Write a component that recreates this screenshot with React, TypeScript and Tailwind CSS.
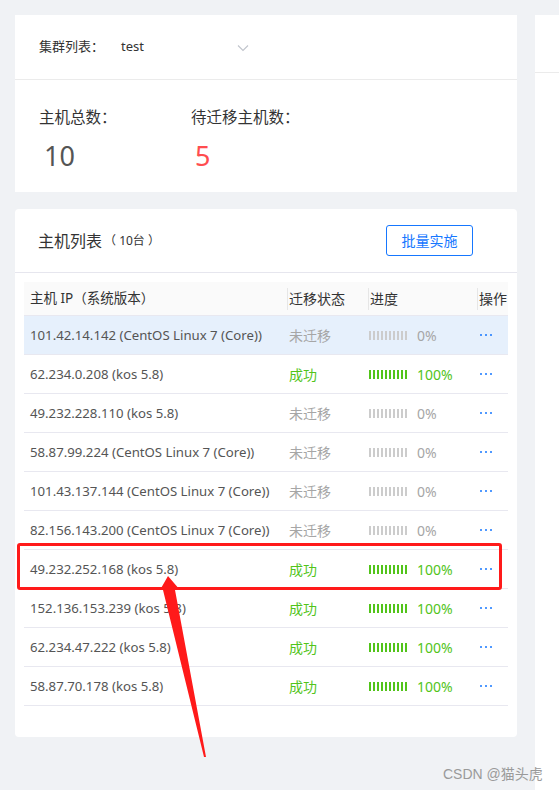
import React from "react";

const rows = [
  { ip: "101.42.14.142 (CentOS Linux 7 (Core))", ok: false, sel: true },
  { ip: "62.234.0.208 (kos 5.8)", ok: true },
  { ip: "49.232.228.110 (kos 5.8)", ok: false },
  { ip: "58.87.99.224 (CentOS Linux 7 (Core))", ok: false },
  { ip: "101.43.137.144 (CentOS Linux 7 (Core))", ok: false },
  { ip: "82.156.143.200 (CentOS Linux 7 (Core))", ok: false },
  { ip: "49.232.252.168 (kos 5.8)", ok: true },
  { ip: "152.136.153.239 (kos 5.8)", ok: true },
  { ip: "62.234.47.222 (kos 5.8)", ok: true },
  { ip: "58.87.70.178 (kos 5.8)", ok: true },
];

const font = { fontFamily: '"Segoe UI", "Noto Sans", "Noto Sans CJK SC", sans-serif' };

function Bar({ ok }: { ok: boolean }) {
  return (
    <div className="flex gap-[2px] items-center">
      {Array.from({ length: 10 }).map((_, i) => (
        <div key={i} className={ok ? "w-[2px] h-[9px] bg-[#52c41a]" : "w-[2px] h-[9px] bg-[#cccccc]"} />
      ))}
    </div>
  );
}

export default function App() {
  return (
    <div
      className="relative w-[559px] h-[790px] bg-[#f0f2f5] flex overflow-hidden"
      style={font}
    >
      <div className="w-[517px] pl-[15px] pt-[15px] flex flex-col">
        {/* top card */}
        <div className="bg-white h-[177px] flex flex-col">
          <div className="h-[65px] border-b border-[#ebebeb] flex items-center pl-[24px] text-[13px] text-[#333]">
            <span className="w-[82px]">集群列表：</span>
            <span className="text-[13px] text-[#333]">test</span>
            <svg className="ml-[93px] mt-[1px]" width="12" height="8" viewBox="0 0 12 8">
              <path d="M1 1.5 L6 6.5 L11 1.5" fill="none" stroke="#c0c4cc" strokeWidth="1.1" />
            </svg>
          </div>
          <div className="flex pl-[24px] pt-[26px]">
            <div className="w-[152px] flex flex-col">
              <span className="text-[15.5px] text-[#333] leading-[22px]">主机总数：</span>
              <span className="text-[27px] text-[#555] leading-[32px] mt-[12px] pl-[5px]">10</span>
            </div>
            <div className="flex flex-col">
              <span className="text-[15.5px] text-[#333] leading-[22px]">待迁移主机数：</span>
              <span className="text-[27px] text-[#ff4d4f] leading-[32px] mt-[12px] pl-[4px]">5</span>
            </div>
          </div>
        </div>

        {/* table card */}
        <div className="mt-[17px] bg-white h-[528px] rounded-[4px] flex flex-col">
          <div className="h-[64px] border-b border-[#e6e6ee] flex items-center pl-[23px] pr-[44px]">
            <span className="text-[16px] text-[#333]">主机列表</span>
            <span className="text-[12px] text-[#333] ml-[2px]">（ 10台 ）</span>
            <div className="flex-1" />
            <button className="w-[87px] h-[31px] border border-[#1677ff] rounded-[3px] text-[14px] text-[#1677ff] bg-white">
              批量实施
            </button>
          </div>
          <div className="mx-[9px] mt-[9px] overflow-hidden">
            <div className="w-[540px]">
              <div className="h-[34px] bg-[#fafafa] flex items-center text-[14px] text-[#333] border-b border-[#e8e8f0]">
                <div className="w-[263px] pl-[6px] text-[13.5px]">主机 IP（系统版本）</div>
                <div className="w-[81px] border-l border-[#e6e6e6] pl-[1px] h-[22px] flex items-center">迁移状态</div>
                <div className="w-[109px] border-l border-[#e6e6e6] pl-[1px] h-[22px] flex items-center">进度</div>
                <div className="flex-1 border-l border-[#e6e6e6] pl-[1px] h-[22px] flex items-center">操作</div>
              </div>
              {rows.map((r, i) => (
                <div
                  key={i}
                  className={
                    r.sel
                      ? "h-[39px] bg-[#e6f0fc] flex items-center text-[14px] border-b border-[#e8e8f0]"
                      : "h-[39px] bg-white flex items-center text-[14px] border-b border-[#e8e8f0]"
                  }
                >
                  <div className="w-[263px] pl-[6px] pt-[2px] text-[#555] text-[13.2px]">{r.ip}</div>
                  <div className={r.ok ? "w-[81px] pl-[2px] text-[#52c41a]" : "w-[81px] pl-[2px] text-[#a6a6a6]"}>
                    {r.ok ? "成功" : "未迁移"}
                  </div>
                  <div className="w-[109px] pl-[1px] flex items-center">
                    <Bar ok={r.ok} />
                    <span className={r.ok ? "ml-[10px] text-[#52c41a]" : "ml-[10px] text-[#a6a6a6]"}>
                      {r.ok ? "100%" : "0%"}
                    </span>
                  </div>
                  <div className="flex-1 pl-[3px] flex items-center gap-[3px]">
                    <div className="w-[2px] h-[2px] bg-[#1677ff] rounded-full" />
                    <div className="w-[2px] h-[2px] bg-[#1677ff] rounded-full" />
                    <div className="w-[2px] h-[2px] bg-[#1677ff] rounded-full" />
                  </div>
                </div>
              ))}
            </div>
          </div>
        </div>
      </div>

      {/* right panel */}
      <div className="ml-[18px] mt-[15px] flex-1 bg-white">
        <div className="h-[58px] border-b border-[#ebebeb]" />
      </div>

      {/* red highlight box */}
      <div className="absolute left-[17px] top-[543px] w-[485px] h-[47px] border-[3px] border-[#ff1a1a] rounded-[3px]" />

      {/* red arrow */}
      <svg className="absolute left-0 top-0" width="559" height="790" viewBox="0 0 559 790">
        <polygon points="168,576 180,590 175,590 206,757 204,757 163,590 160,590" fill="#ff1a1a" />
      </svg>

      {/* watermark */}
      <div className="absolute left-[443px] top-[764px] text-[14px] text-[#9a9a9a]" style={{ fontFamily: '"Liberation Sans", "Noto Sans CJK SC", sans-serif' }}>
        CSDN @猫头虎
      </div>
    </div>
  );
}
